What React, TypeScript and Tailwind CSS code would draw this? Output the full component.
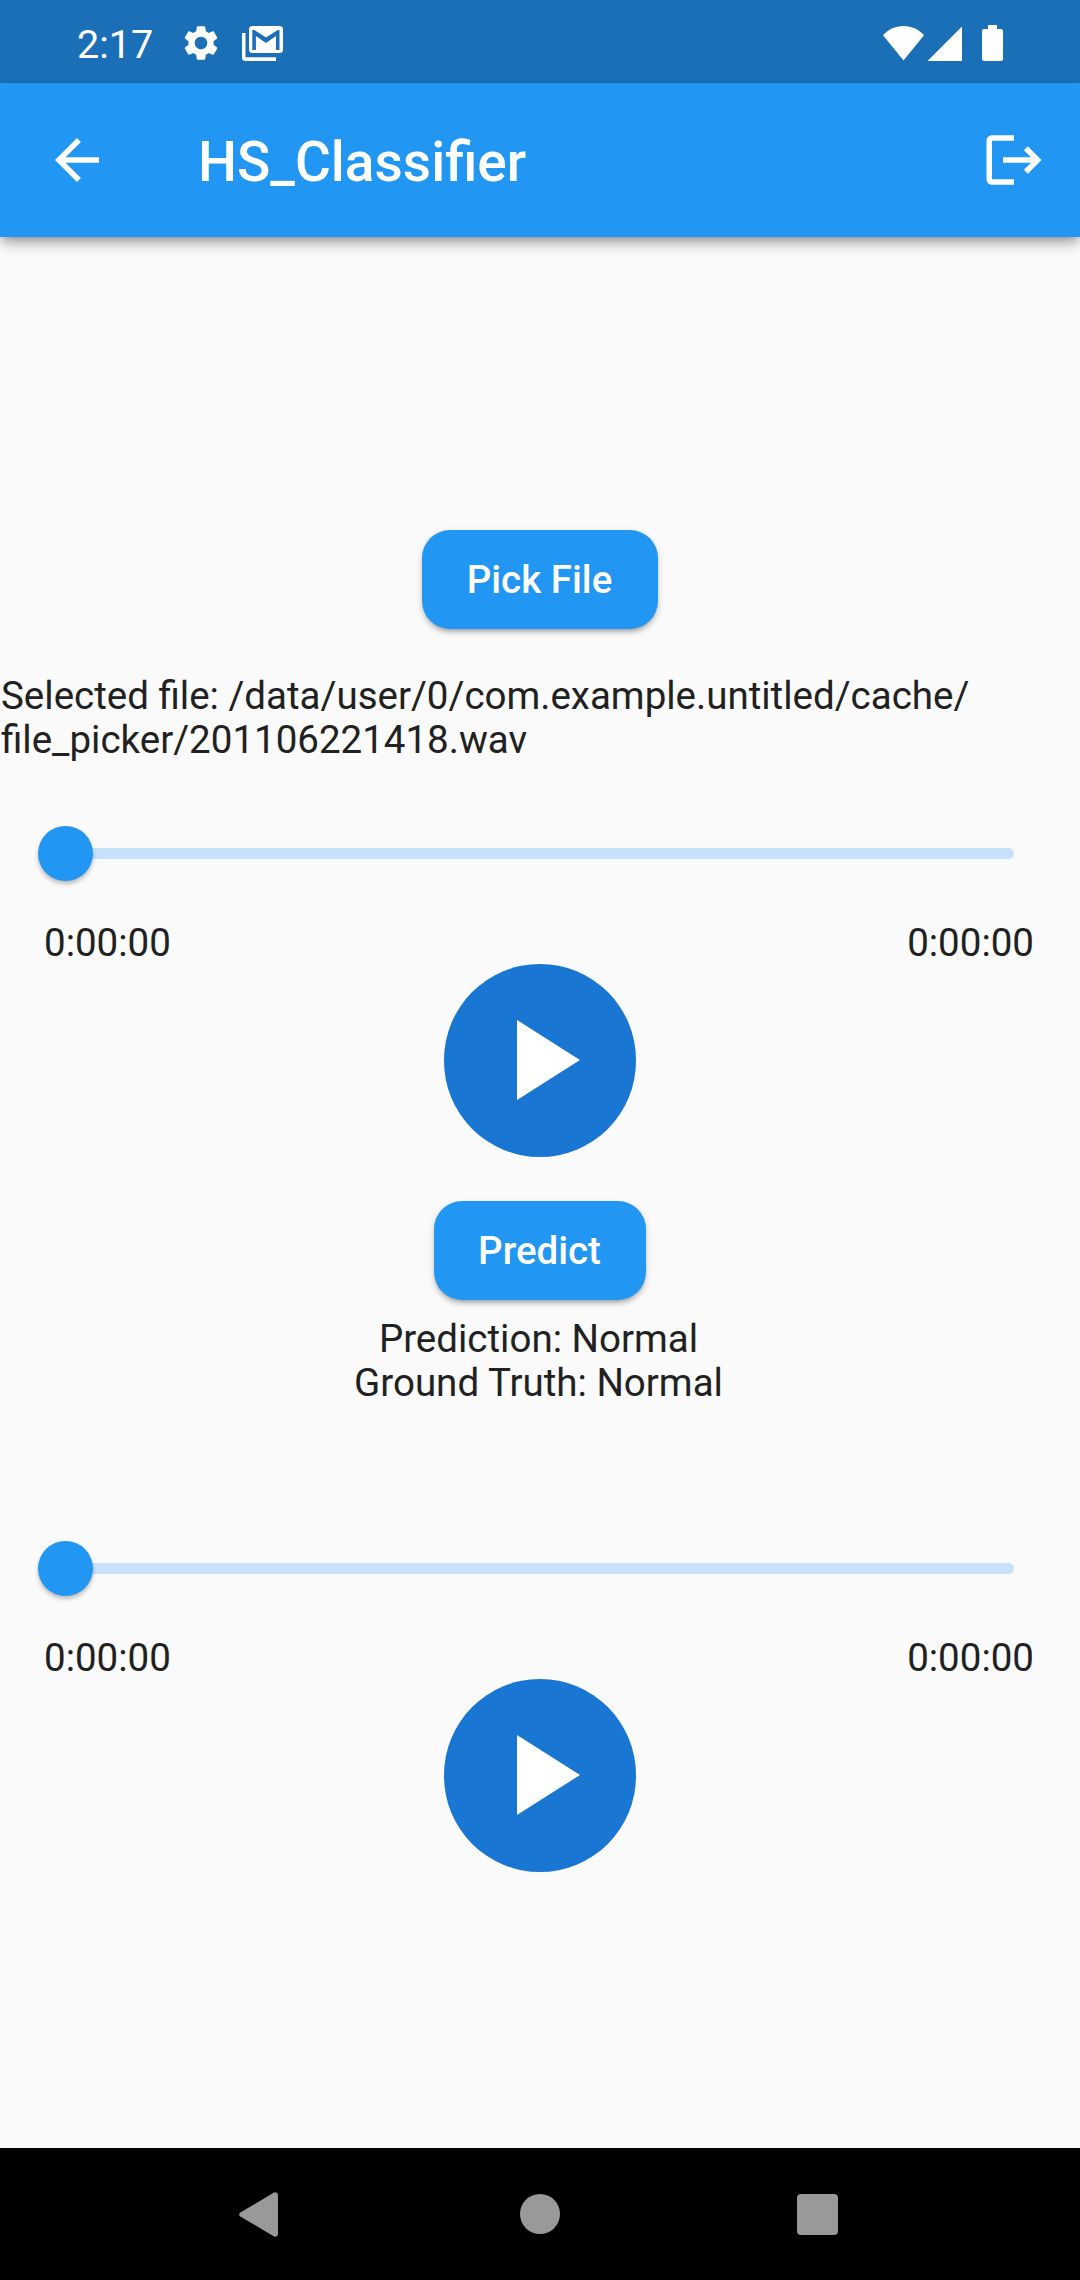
function StatusBar() {
  return (
    <div className="flex h-[83px] items-center bg-[#1a6fb6] text-white">
      <span className="ml-[77px] mt-[6px] w-[107px] text-[39.5px] leading-[46px]">2:17</span>
      <svg className="mt-[3px] size-[42px] -ml-[4px]" viewBox="0 0 24 24" fill="currentColor">
        <path d="M19.14 12.94c.04-.3.06-.61.06-.94 0-.32-.02-.64-.07-.94l2.03-1.58c.18-.14.23-.41.12-.61l-1.92-3.32c-.12-.22-.37-.29-.59-.22l-2.39.96c-.5-.38-1.03-.7-1.62-.94l-.36-2.54c-.04-.24-.24-.41-.48-.41h-3.84c-.24 0-.43.17-.47.41l-.36 2.54c-.59.24-1.13.57-1.62.94l-2.39-.96c-.22-.08-.47 0-.59.22L2.74 8.87c-.12.21-.08.47.12.61l2.03 1.58c-.05.3-.09.63-.09.94s.02.64.07.94l-2.03 1.58c-.18.14-.23.41-.12.61l1.92 3.32c.12.22.37.29.59.22l2.39-.96c.5.38 1.03.7 1.62.94l.36 2.54c.05.24.24.41.48.41h3.84c.24 0 .44-.17.47-.41l.36-2.54c.59-.24 1.13-.56 1.62-.94l2.39.96c.22.08.47 0 .59-.22l1.92-3.32c.12-.22.07-.47-.12-.61l-2.01-1.58zM12 15.6c-1.98 0-3.6-1.62-3.6-3.6s1.62-3.6 3.6-3.6 3.6 1.62 3.6 3.6-1.62 3.6-3.6 3.6z" />
      </svg>
      <svg className="ml-[20px] mt-[4px] h-[35px] w-[41px]" viewBox="0 0 41 35" fill="currentColor">
        <path d="M0 7h3.5v24.3H34V35H3.5A3.5 3.5 0 0 1 0 31.500z" />
        <path fillRule="evenodd" d="M10.500 0h27A3.500 3.500 0 0 1 41 3.500v20a3.500 3.500 0 0 1-3.500 3.500h-27A3.500 3.500 0 0 1 7 23.500v-20A3.500 3.500 0 0 1 10.500 0zM10.300 4v20h3.600V10L24 17l10-7v14h3.500V4h-1.700L24 11.500 12.300 4z" />
      </svg>
      <svg className="ml-auto mt-[3px] h-[35px] w-[41px]" viewBox="0 0 41 35" fill="currentColor">
        <path d="M20.500 34.500 0 9.300C5 3.500 12 0 20.500 0S36 3.500 41 9.300z" />
      </svg>
      <svg className="ml-[3px] mt-[3px] size-[35px]" viewBox="0 0 35 35" fill="currentColor">
        <path d="M35 .5V35H.5z" />
      </svg>
      <svg className="ml-[20px] mr-[77px] mt-[3px] h-[36px] w-[21px]" viewBox="0 0 21 36" fill="currentColor">
        <path d="M6 0h9v4h4a2 2 0 0 1 2 2v28a2 2 0 0 1-2 2H2a2 2 0 0 1-2-2V6a2 2 0 0 1 2-2h4z" />
      </svg>
    </div>
  );
}

function AppBar() {
  return (
    <header className="flex h-[154px] items-center bg-[#2196f3] pl-11 pr-[33.500px] text-white shadow-[0_5px_11px_0_rgba(0,0,0,0.2),0_11px_14px_-3px_rgba(0,0,0,0.14),0_3px_8px_-3px_rgba(0,0,0,0.2)]">
      <svg className="size-[66px]" viewBox="0 0 24 24" fill="currentColor">
        <path d="M20 11H7.830l5.590-5.590L12 4l-8 8 8 8 1.410-1.410L7.830 13H20v-2z" />
      </svg>
      <h1 className="ml-[88px] mt-1 text-[55px] font-medium leading-[64px]">HS_Classifier</h1>
      <svg className="ml-auto size-[66px]" viewBox="0 0 24 24" fill="currentColor">
        <path d="M17 7l-1.410 1.410L18.170 11H8v2h10.170l-2.580 2.580L17 17l5-5zM4 5h8V3H4c-1.100 0-2 .9-2 2v14c0 1.100.9 2 2 2h8v-2H4V5z" />
      </svg>
    </header>
  );
}

function RaisedButton({ label, width }: { label: string; width: string }) {
  return (
    <button
      className={`${width} h-[99px] rounded-[28px] pr-px pt-px text-[38.500px] font-medium leading-[44px] text-white bg-[#2196f3] shadow-[0_3px_6px_0_rgba(0,0,0,0.22),0_5px_5px_-4px_rgba(0,0,0,0.25)]`}
    >
      {label}
    </button>
  );
}

function Player() {
  return (
    <section className="flex w-full flex-col items-center">
      <div className="flex h-[131px] w-full items-center pl-[38px] pr-[66px]">
        <div className="z-10 size-[55px] shrink-0 rounded-full bg-[#2196f3] shadow-[0_3px_4px_0_rgba(0,0,0,0.25)]" />
        <div className="-ml-3 h-[11px] flex-1 rounded-full bg-[#c7e2f8]" />
      </div>
      <div className="flex w-full justify-between pl-11 pr-[46px] pt-[2px] leading-[44px]">
        <span>0:00:00</span>
        <span>0:00:00</span>
      </div>
      <button className="-mt-px flex size-[192.500px] items-center justify-center rounded-full bg-[#1976d2]">
        <svg className="ml-[16px] h-[80px] w-[63px]" viewBox="0 0 63 80" fill="white">
          <path d="M0 0v80l63-40z" />
        </svg>
      </button>
    </section>
  );
}

function NavBar() {
  return (
    <nav className="flex h-[132px] items-center bg-black pl-[239px] pr-[242px] text-[#999]">
      <svg className="mt-[1px] h-[45px] w-[39px]" viewBox="0 0 39 45" fill="currentColor">
        <path d="M1.300 20.500 35 .6A2.700 2.700 0 0 1 39 3v39a2.700 2.700 0 0 1-4 2.400L1.300 24.500a2.400 2.400 0 0 1 0-4z" />
      </svg>
      <div className="ml-[242px] size-[40px] rounded-full bg-[#999]" />
      <div className="ml-auto mt-px size-[41px] rounded-[4px] bg-[#999]" />
    </nav>
  );
}

export default function App() {
  return (
    <div className="flex h-[2280px] w-[1080px] flex-col bg-[#fafafa] font-[Roboto,sans-serif] text-[38.500px] text-[#212121]">
      <StatusBar />
      <AppBar />
      <main className="flex flex-1 flex-col items-center pt-[292.500px]">
        <RaisedButton label="Pick File" width="w-[236.500px]" />
        <p className="mt-[45.500px] w-full pl-px leading-[44px]">
          Selected file: /data/user/0/com.example.untitled/cache/
          <br />
          file_picker/201106221418.wav
        </p>
        <div className="mt-[26px] w-full">
          <Player />
        </div>
        <div className="mt-[44px]">
          <RaisedButton label="Predict" width="w-[212px]" />
        </div>
        <div className="mt-[17.500px] pr-[3px] text-center leading-[44px]">
          <p>Prediction: Normal</p>
          <p>Ground Truth: Normal</p>
        </div>
        <div className="mt-[98px] w-full">
          <Player />
        </div>
      </main>
      <NavBar />
    </div>
  );
}
